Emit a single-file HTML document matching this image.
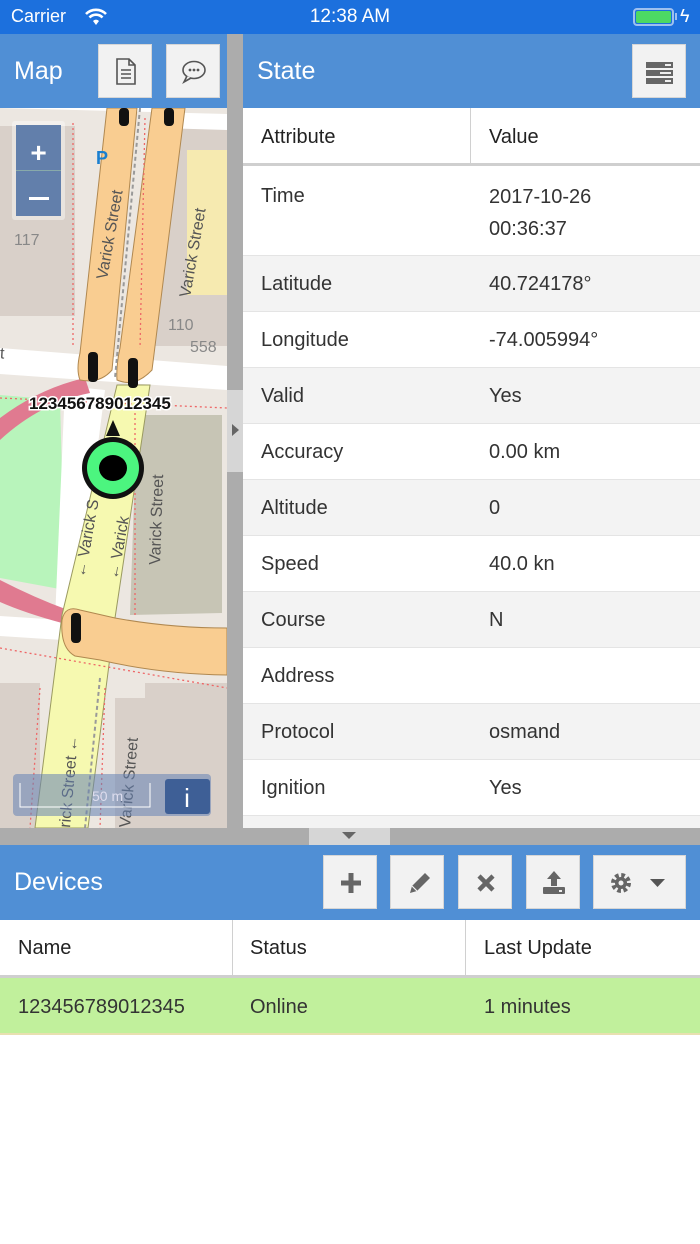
<!DOCTYPE html>
<html><head><style>
*{margin:0;padding:0;box-sizing:border-box}
body{width:700px;height:1244px;overflow:hidden;background:#fff;font-family:"Liberation Sans",sans-serif;position:relative}
.abs{position:absolute}
.sb{left:0;top:0;width:700px;height:34px;background:#1c70dd;color:#fff}
.hdr{background:#508fd5;color:#fff;font-size:25px}
.btn{position:absolute;background:#f2f2f2;border:1px solid #d6d6d6;width:54px;height:54px}
.row{position:absolute;left:243px;width:457px;height:56px;font-size:20px;color:#333;border-bottom:1px solid #e4e4e4}
.row span{position:absolute;top:17px}
.row .a{left:18px}.row .v{left:246px}
.g{background:#f3f3f3}
</style></head><body>
<div class="abs sb">
<div class="abs" style="left:11px;top:6px;font-size:18px">Carrier</div>
<svg class="abs" style="left:84px;top:8px" width="24" height="18" viewBox="0 0 24 18"><path d="M2 6a14 14 0 0 1 20 0" stroke="#fff" stroke-width="2.6" fill="none"/><path d="M5.5 9.5a9 9 0 0 1 13 0" stroke="#fff" stroke-width="2.6" fill="none"/><path d="M9 13a4 4 0 0 1 6 0L12 17z" fill="#fff"/></svg>
<div class="abs" style="left:0;width:700px;text-align:center;top:6px;font-size:19px">12:38 AM</div>
<div class="abs" style="left:633px;top:8px;width:41px;height:18px;border:2px solid #9ec0ef;border-radius:4px;padding:1px"><div style="background:#4cd964;width:100%;height:100%;border-radius:2px"></div></div>
<div class="abs" style="left:675px;top:13px;width:2px;height:7px;background:#9ec0ef"></div>
<div class="abs" style="left:680px;top:6px;font-size:18px">ϟ</div>
</div>
<div class="abs hdr" style="left:0;top:34px;width:227px;height:74px"><div class="abs" style="left:14px;top:23px">Map</div>
<div class="btn" style="left:98px;top:10px"><svg width="54" height="54"><path d="M18 14h12l6 6v19H18z M30 14v6h6 M22 25h10M22 29h10M22 33h10" stroke="#555" stroke-width="1.6" fill="none"/></svg></div>
<div class="btn" style="left:166px;top:10px"><svg width="54" height="54"><ellipse cx="27" cy="25" rx="11" ry="8.5" stroke="#555" stroke-width="1.6" fill="none"/><path d="M20 31l-3 6 7-4" stroke="#555" stroke-width="1.6" fill="#f2f2f2"/><circle cx="23" cy="25" r="1.4" fill="#555"/><circle cx="27" cy="25" r="1.4" fill="#555"/><circle cx="31" cy="25" r="1.4" fill="#555"/></svg></div>
</div>
<div class="abs" style="left:227px;top:34px;width:16px;height:794px;background:#acacac"></div>
<div class="abs" style="left:227px;top:390px;width:16px;height:82px;background:#d6d6d6"></div>
<div class="abs" style="left:232px;top:424px;border-left:7px solid #666;border-top:6px solid transparent;border-bottom:6px solid transparent"></div>
<div class="abs hdr" style="left:243px;top:34px;width:457px;height:74px"><div class="abs" style="left:14px;top:23px">State</div>
<div class="btn" style="left:389px;top:10px"><svg width="54" height="54"><rect x="13" y="17" width="27" height="6" fill="#666"/><rect x="13" y="25" width="27" height="6" fill="#666"/><rect x="13" y="33" width="27" height="6" fill="#666"/><rect x="32" y="19" width="6" height="2" fill="#eee"/><rect x="27" y="27" width="11" height="2" fill="#eee"/><rect x="32" y="35" width="6" height="2" fill="#eee"/></svg></div>
</div>
<div class="row" style="top:108px;height:58px;border-bottom:3px solid #cfcfcf"><span class="a" style="top:18px;color:#222">Attribute</span><span class="v" style="top:18px;color:#222">Value</span><div class="abs" style="left:227px;top:0;width:1px;height:55px;background:#d0d0d0"></div></div>
<div class="row" style="top:166px;height:90px"><span class="a" style="top:19px">Time</span><span class="v" style="line-height:32px;top:15px">2017-10-26<br>00:36:37</span></div>
<div class="row g" style="top:256px"><span class="a">Latitude</span><span class="v">40.724178°</span></div>
<div class="row" style="top:312px"><span class="a">Longitude</span><span class="v">-74.005994°</span></div>
<div class="row g" style="top:368px"><span class="a">Valid</span><span class="v">Yes</span></div>
<div class="row" style="top:424px"><span class="a">Accuracy</span><span class="v">0.00 km</span></div>
<div class="row g" style="top:480px"><span class="a">Altitude</span><span class="v">0</span></div>
<div class="row" style="top:536px"><span class="a">Speed</span><span class="v">40.0 kn</span></div>
<div class="row g" style="top:592px"><span class="a">Course</span><span class="v">N</span></div>
<div class="row" style="top:648px"><span class="a">Address</span><span class="v"></span></div>
<div class="row g" style="top:704px"><span class="a">Protocol</span><span class="v">osmand</span></div>
<div class="row" style="top:760px"><span class="a">Ignition</span><span class="v">Yes</span></div>
<div class="row g" style="top:816px;height:12px;border:0"></div>
<svg class="abs" style="left:0;top:108px" width="227" height="720" viewBox="0 0 227 720">
<rect width="227" height="720" fill="#ece7e1"/>
<rect x="0" y="18" width="75" height="190" fill="#d9d0c9"/>
<rect x="150" y="18" width="77" height="220" fill="#d9d0c9"/>
<rect x="187" y="42" width="40" height="145" fill="#f6eab0"/>
<path d="M0 0 L227 6 L227 22 L160 20 L160 0z" fill="#fff"/>
<path d="M0 287 L60 292 L65 482 L0 470z" fill="#b8f4bb"/>
<path d="M137 307 L222 307 L222 505 L130 507z" fill="#c7c5b5"/>
<rect x="145" y="575" width="82" height="70" fill="#d9d0c9"/>
<rect x="0" y="575" width="40" height="145" fill="#d9d0c9"/>
<rect x="115" y="590" width="112" height="130" fill="#d9d0c9"/>
<path d="M0 240 L227 258 L227 282 L0 266z" fill="#fff"/>
<path d="M0 508 L62 512 L62 532 L0 528z" fill="#fff"/>
<path d="M65 278 L105 282 L75 515 L55 512z" fill="#fff"/>
<path d="M0 310 Q40 280 85 270 L90 285 Q40 295 0 332z" fill="#e07a90"/>
<path d="M0 472 Q35 490 68 502 L62 515 Q25 505 0 494z" fill="#e07a90"/>
<path d="M117 277 L150 277 L115 510 L88 720 L35 720 L62 507z" fill="#f6f9b0" stroke="#9a9a60" stroke-width="1"/>
<path d="M107 0 L137 0 L112 262 Q100 276 80 272 Q76 262 80 245z" fill="#f9cd91" stroke="#b08850" stroke-width="1"/>
<path d="M152 0 L185 0 L152 262 Q135 280 117 272 Q116 258 120 240z" fill="#f9cd91" stroke="#b08850" stroke-width="1"/>
<path d="M62 512 Q65 497 80 502 L115 510 Q170 520 227 520 L227 567 Q160 566 100 552 L75 548 Q60 540 62 512z" fill="#f9cd91" stroke="#b08850" stroke-width="1"/>
<path d="M140 0 L115 270" stroke="#999" stroke-width="2" stroke-dasharray="4 3"/>
<path d="M100 570 L85 720" stroke="#999" stroke-width="2" stroke-dasharray="4 3"/>
<g stroke="#e66" stroke-width="1.3" stroke-dasharray="2 3" fill="none"><path d="M73 15 L73 240"/><path d="M145 10 L140 240"/><path d="M0 290 L227 300"/><path d="M135 305 L135 507"/><path d="M0 540 L227 580"/><path d="M105 580 L100 720"/><path d="M40 580 L30 720"/></g>
<g fill="#555" font-family="Liberation Sans,sans-serif" font-size="16">
<text transform="translate(107 172) rotate(-80)">Varick Street</text>
<text transform="translate(190 190) rotate(-80)">Varick Street</text>
<text transform="translate(160 457) rotate(-88)">Varick Street</text>
<text transform="translate(85 470) rotate(-80)">← Varick S</text>
<text transform="translate(118 472) rotate(-80)">← Varick</text>
<text transform="translate(70 720) rotate(-85)">rick Street ←</text>
<text transform="translate(130 720) rotate(-85)">Varick Street</text>
<text x="-5" y="250" transform="rotate(3)">eet</text>
<text x="14" y="137" fill="#888">117</text>
<text x="168" y="222" fill="#888">110</text>
<text x="190" y="244" fill="#888">558</text>
<text x="96" y="56" fill="#1a7fd0" font-weight="bold" font-size="18">P</text>
</g>
<g fill="#111"><rect x="119" y="0" width="10" height="18" rx="4"/><rect x="164" y="0" width="10" height="18" rx="4"/><rect x="88" y="244" width="10" height="30" rx="4"/><rect x="128" y="250" width="10" height="30" rx="4"/><rect x="71" y="505" width="10" height="30" rx="4"/></g>
<text x="29" y="301" font-family="Liberation Sans,sans-serif" font-weight="bold" font-size="17" fill="#111" stroke="#fff" stroke-width="3" paint-order="stroke">123456789012345</text>
<path d="M113 312 L120 328 L106 328z" fill="#111"/>
<circle cx="113" cy="360" r="31" fill="#111"/><circle cx="113" cy="360" r="26" fill="#4cf57f"/><ellipse cx="113" cy="360" rx="14" ry="13" fill="#000"/>
<rect x="12" y="13" width="53" height="99" rx="3" fill="rgba(255,255,255,.4)"/>
<rect x="16" y="17" width="45" height="91" fill="#5b79a8" opacity=".95"/>
<rect x="16" y="62" width="45" height="1" fill="#8aa"/>
<text x="38.5" y="54" text-anchor="middle" fill="#fff" font-size="28" font-weight="bold" font-family="Liberation Sans,sans-serif">+</text>
<rect x="29" y="89" width="20" height="3" fill="#fff"/>
<rect x="13" y="666" width="198" height="42" rx="4" fill="rgba(100,130,180,.55)"/>
<path d="M20 675 V699 H150 V675" stroke="#fff" stroke-width="1" fill="none"/>
<text x="92" y="693" fill="#dde" font-size="14" font-family="Liberation Sans,sans-serif">50 m</text>
<rect x="165" y="671" width="45" height="35" rx="3" fill="#3e5f96"/>
<text x="187" y="699" text-anchor="middle" fill="#fff" font-size="26" font-family="Liberation Sans,sans-serif">i</text>
</svg>
<div class="abs" style="left:0;top:828px;width:700px;height:17px;background:#acacac"></div>
<div class="abs" style="left:309px;top:828px;width:81px;height:17px;background:#d6d6d6"></div>
<div class="abs" style="left:342px;top:832px;border-top:7px solid #666;border-left:7px solid transparent;border-right:7px solid transparent"></div>
<div class="abs hdr" style="left:0;top:845px;width:700px;height:75px"><div class="abs" style="left:14px;top:23px">Devices</div>
<div class="btn" style="left:323px;top:10px"><svg width="54" height="54"><path d="M27 17v20M17 27h20" stroke="#666" stroke-width="5"/></svg></div>
<div class="btn" style="left:390px;top:10px"><svg width="54" height="54"><path d="M19 37l2-7 13-13 5 5-13 13z" fill="#666"/><path d="M21 30l5 5" stroke="#f2f2f2" stroke-width="1.2"/></svg></div>
<div class="btn" style="left:458px;top:10px"><svg width="54" height="54"><path d="M20 20l14 14M34 20L20 34" stroke="#666" stroke-width="4.5"/></svg></div>
<div class="btn" style="left:526px;top:10px"><svg width="54" height="54"><path d="M27 15l-7 8h4v7h6v-7h4z" fill="#666"/><rect x="16" y="31" width="22" height="7" rx="1" fill="#666"/><rect x="32" y="34" width="3" height="2" fill="#eee"/></svg></div>
<div class="btn" style="left:593px;top:10px;width:93px"><svg width="93" height="54"><circle cx="27" cy="27" r="7" fill="none" stroke="#666" stroke-width="6" stroke-dasharray="3.2 2.3"/><circle cx="27" cy="27" r="6" fill="#666"/><circle cx="27" cy="27" r="2.5" fill="#f2f2f2"/><path d="M56 23h15l-7.5 8z" fill="#555"/></svg></div>
</div>
<div class="abs" style="left:0;top:920px;width:700px;height:58px;border-bottom:3px solid #cfcfcf;font-size:20px;color:#222">
<span class="abs" style="left:18px;top:17px">Name</span><span class="abs" style="left:250px;top:17px">Status</span><span class="abs" style="left:484px;top:17px">Last Update</span>
<div class="abs" style="left:232px;top:0;width:1px;height:55px;background:#d0d0d0"></div><div class="abs" style="left:465px;top:0;width:1px;height:55px;background:#d0d0d0"></div></div>
<div class="abs" style="left:0;top:978px;width:700px;height:57px;background:#c1f09c;border-bottom:2px solid #e8e0b0;font-size:20px;color:#333">
<span class="abs" style="left:18px;top:18px">123456789012345</span><span class="abs" style="left:250px;top:18px">Online</span><span class="abs" style="left:484px;top:18px">1 minutes</span></div>
</body></html>
